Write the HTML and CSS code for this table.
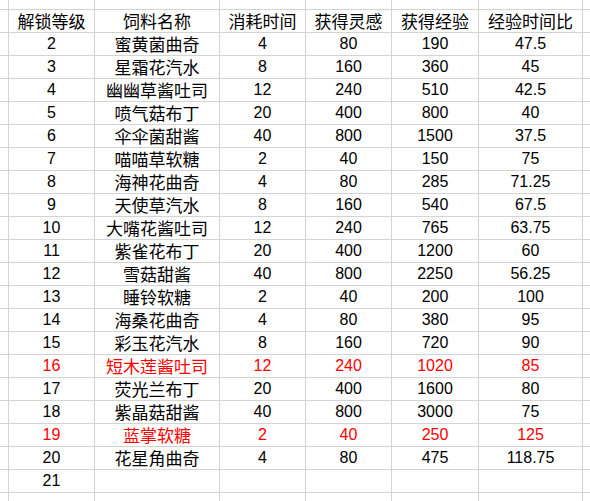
FILE: index.html
```html
<!DOCTYPE html>
<html lang="zh">
<head>
<meta charset="utf-8">
<link rel="stylesheet" href="styles.css">
</head>
<body>
<div class="sheet">
  <div class="c"></div><div class="c"></div><div class="c"></div><div class="c"></div><div class="c"></div><div class="c"></div><div class="c"></div><div class="c"></div>

  <div class="c"></div><div class="c zh">解锁等级</div><div class="c zh">饲料名称</div><div class="c zh">消耗时间</div><div class="c zh">获得灵感</div><div class="c zh">获得经验</div><div class="c zh">经验时间比</div><div class="c"></div>

  <div class="c"></div><div class="c">2</div><div class="c zh">蜜黄菌曲奇</div><div class="c">4</div><div class="c">80</div><div class="c">190</div><div class="c">47.5</div><div class="c"></div>
  <div class="c"></div><div class="c">3</div><div class="c zh">星霜花汽水</div><div class="c">8</div><div class="c">160</div><div class="c">360</div><div class="c">45</div><div class="c"></div>
  <div class="c"></div><div class="c">4</div><div class="c zh">幽幽草酱吐司</div><div class="c">12</div><div class="c">240</div><div class="c">510</div><div class="c">42.5</div><div class="c"></div>
  <div class="c"></div><div class="c">5</div><div class="c zh">喷气菇布丁</div><div class="c">20</div><div class="c">400</div><div class="c">800</div><div class="c">40</div><div class="c"></div>
  <div class="c"></div><div class="c">6</div><div class="c zh">伞伞菌甜酱</div><div class="c">40</div><div class="c">800</div><div class="c">1500</div><div class="c">37.5</div><div class="c"></div>
  <div class="c"></div><div class="c">7</div><div class="c zh">喵喵草软糖</div><div class="c">2</div><div class="c">40</div><div class="c">150</div><div class="c">75</div><div class="c"></div>
  <div class="c"></div><div class="c">8</div><div class="c zh">海神花曲奇</div><div class="c">4</div><div class="c">80</div><div class="c">285</div><div class="c">71.25</div><div class="c"></div>
  <div class="c"></div><div class="c">9</div><div class="c zh">天使草汽水</div><div class="c">8</div><div class="c">160</div><div class="c">540</div><div class="c">67.5</div><div class="c"></div>
  <div class="c"></div><div class="c">10</div><div class="c zh">大嘴花酱吐司</div><div class="c">12</div><div class="c">240</div><div class="c">765</div><div class="c">63.75</div><div class="c"></div>
  <div class="c"></div><div class="c">11</div><div class="c zh">紫雀花布丁</div><div class="c">20</div><div class="c">400</div><div class="c">1200</div><div class="c">60</div><div class="c"></div>
  <div class="c"></div><div class="c">12</div><div class="c zh">雪菇甜酱</div><div class="c">40</div><div class="c">800</div><div class="c">2250</div><div class="c">56.25</div><div class="c"></div>
  <div class="c"></div><div class="c">13</div><div class="c zh">睡铃软糖</div><div class="c">2</div><div class="c">40</div><div class="c">200</div><div class="c">100</div><div class="c"></div>
  <div class="c"></div><div class="c">14</div><div class="c zh">海桑花曲奇</div><div class="c">4</div><div class="c">80</div><div class="c">380</div><div class="c">95</div><div class="c"></div>
  <div class="c"></div><div class="c">15</div><div class="c zh">彩玉花汽水</div><div class="c">8</div><div class="c">160</div><div class="c">720</div><div class="c">90</div><div class="c"></div>
  <div class="c"></div><div class="c red">16</div><div class="c zh red">短木莲酱吐司</div><div class="c red">12</div><div class="c red">240</div><div class="c red">1020</div><div class="c red">85</div><div class="c"></div>
  <div class="c"></div><div class="c">17</div><div class="c zh">荧光兰布丁</div><div class="c">20</div><div class="c">400</div><div class="c">1600</div><div class="c">80</div><div class="c"></div>
  <div class="c"></div><div class="c">18</div><div class="c zh">紫晶菇甜酱</div><div class="c">40</div><div class="c">800</div><div class="c">3000</div><div class="c">75</div><div class="c"></div>
  <div class="c"></div><div class="c red">19</div><div class="c zh red">蓝掌软糖</div><div class="c red">2</div><div class="c red">40</div><div class="c red">250</div><div class="c red">125</div><div class="c"></div>
  <div class="c"></div><div class="c">20</div><div class="c zh">花星角曲奇</div><div class="c">4</div><div class="c">80</div><div class="c">475</div><div class="c">118.75</div><div class="c"></div>
  <div class="c"></div><div class="c">21</div><div class="c"></div><div class="c"></div><div class="c"></div><div class="c"></div><div class="c"></div><div class="c"></div>

  <div class="c"></div><div class="c"></div><div class="c"></div><div class="c"></div><div class="c"></div><div class="c"></div><div class="c"></div><div class="c"></div>
</div>
</body>
</html>
```

FILE: styles.css
```css
html, body {
  margin: 0;
  padding: 0;
  background: #ffffff;
  overflow: hidden;
}

.sheet {
  display: grid;
  grid-template-columns: 8px 85px 124px 85px 85px 86px 103px 7px;
  grid-template-rows: 9px repeat(22, 22px) 8px;
  gap: 1px;
  background: #d4d4d4;
  width: 590px;
  height: 501px;
  font-family: "Liberation Sans", "Noto Sans CJK SC", sans-serif;
  font-size: 16px;
  color: #000000;
}

.c {
  background: #ffffff;
  display: flex;
  align-items: flex-end;
  justify-content: center;
  line-height: 22px;
  white-space: nowrap;
}

.zh {
  font-family: "Noto Sans CJK SC", "Liberation Sans", sans-serif;
  font-size: 17px;
  line-height: 22px;
}

.red {
  color: #ff0000;
}
```
